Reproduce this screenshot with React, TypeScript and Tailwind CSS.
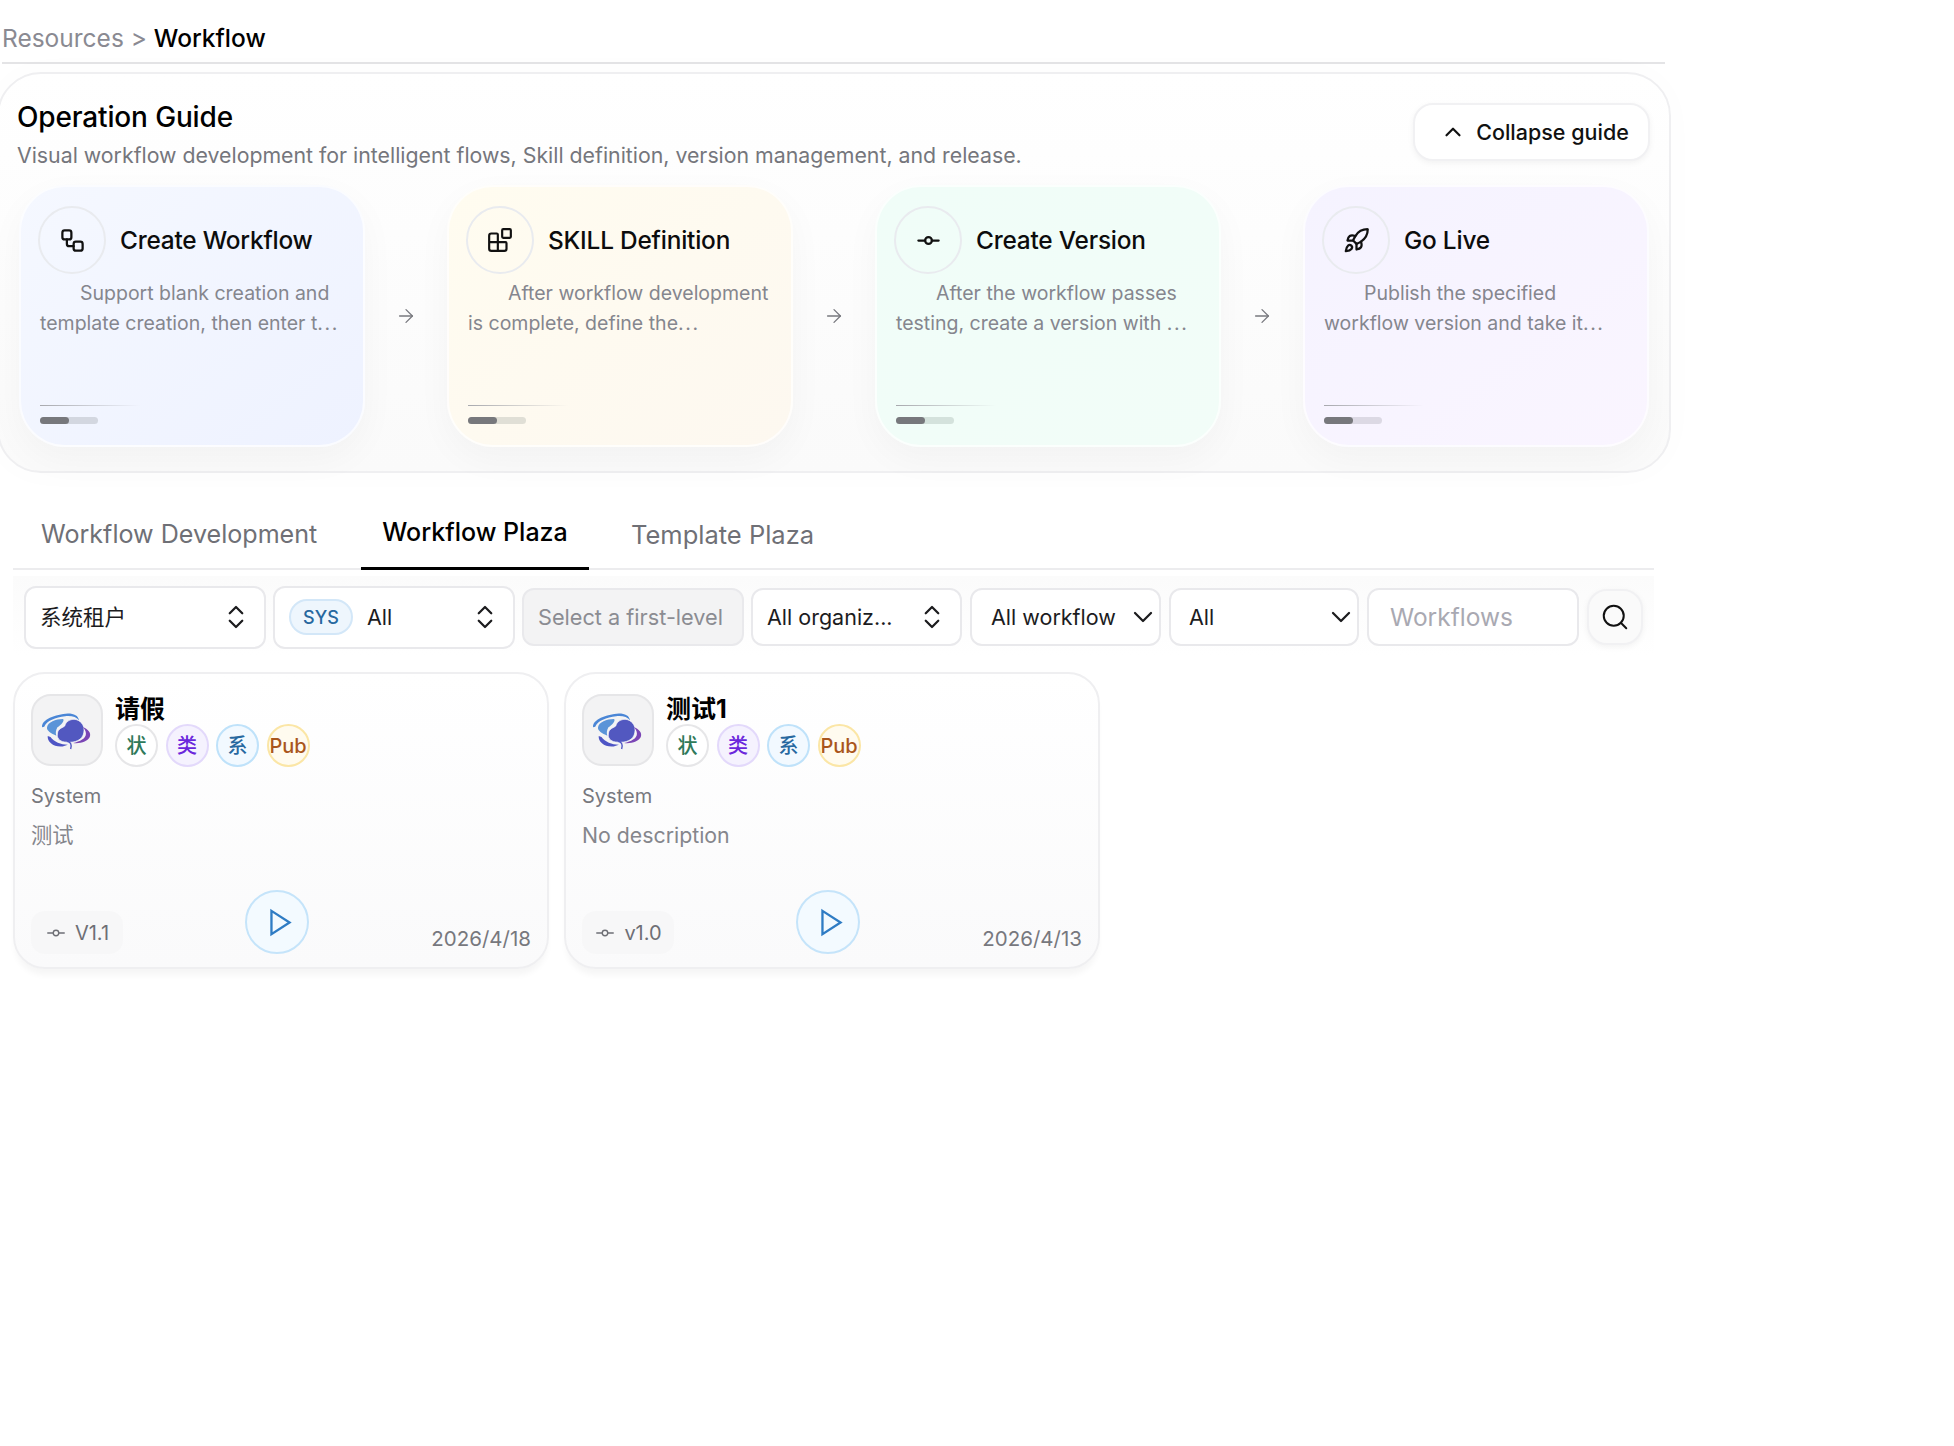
import { ArrowRight, Blocks, ChevronDown, ChevronUp, ChevronsUpDown, GitCommitHorizontal, Rocket, Search, Workflow } from 'lucide-react';

const font = 'font-["Inter","Noto_Sans_CJK_SC",sans-serif]';

function PlayIcon() {
  return (
    <svg width="31" height="31" viewBox="0 0 24 24" fill="none" stroke="currentColor" strokeWidth="1.8" strokeLinejoin="miter" className="ml-1.5">
      <polygon points="5 3 19 12 5 21" />
    </svg>
  );
}

function Logo() {
  return (
    <svg width="54" height="41" viewBox="40 60 155 118" fill="none">
      <path d="M46 110C42 88 85 72 120 70C138 70 150 76 152 90C145 80 130 76 112 78C85 80 58 92 52 108Z" fill="#4a86d6" />
      <path d="M60 110C62 95 85 86 106 86C112 90 100 104 90 110C85 118 84 128 87 134C72 128 58 120 60 110Z" fill="#5a94d8" />
      <path d="M90 128C90 114 104 112 111 106C114 90 135 82 150 90C166 98 170 116 164 132C156 152 130 155 110 152C96 150 87 140 90 128Z" fill="#5258c0" stroke="#fff" strokeWidth="2" />
      <path d="M62 135C60 152 80 168 105 165L120 160C100 160 80 152 70 138Z" fill="#4e55c5" />
      <path d="M162 108C178 115 188 125 183 138C178 150 155 158 135 155C155 150 172 142 172 128C172 120 168 114 162 108Z" fill="#7a45b5" />
      <path d="M118 150C128 152 132 160 128 172" stroke="#4e55c5" strokeWidth="4" />
    </svg>
  );
}

const steps = [
  { title: 'Create Workflow', one: 'Support blank creation and', two: 'template creation, then enter t', end: '...', bg: 'bg-gradient-to-br from-[#f5f8ff] to-[#eef2ff]', track: 'bg-[#d3d7e0]', icon: <Workflow size={27} strokeWidth={2} /> },
  { title: 'SKILL Definition', one: 'After workflow development', two: 'is complete, define the', end: '...', bg: 'bg-gradient-to-br from-[#fffcf0] to-[#fdf8f0]', track: 'bg-[#e0dfd6]', icon: <Blocks size={26} strokeWidth={2} /> },
  { title: 'Create Version', one: 'After the workflow passes', two: 'testing, create a version with ', end: '...', bg: 'bg-gradient-to-br from-[#f0fdf8] to-[#f2fdf8]', track: 'bg-[#d4e2dc]', icon: <GitCommitHorizontal size={27} strokeWidth={2} /> },
  { title: 'Go Live', one: 'Publish the specified', two: 'workflow version and take it', end: '...', bg: 'bg-gradient-to-br from-[#f5f3ff] to-[#faf5ff]', track: 'bg-[#dcd9e4]', icon: <Rocket size={27} strokeWidth={2} /> },
];

function StepCard({ step }: { step: (typeof steps)[number] }) {
  return (
    <div className={`w-[346px] h-[262px] shrink-0 rounded-[46px] border-2 border-white/70 pl-[17px] pt-[19px] shadow-[0_12px_36px_rgba(0,0,0,0.035)] ${step.bg}`}>
      <div className="flex items-center gap-[14px]">
        <div className="w-[68px] h-[68px] rounded-full border-2 border-[#e9ebef] flex items-center justify-center text-[#111]">
          {step.icon}
        </div>
        <h3 className="text-[24.4px] font-medium text-[#0c0c0c] tracking-[-0.2px]">{step.title}</h3>
      </div>
      <p className="mt-[4px] ml-[2px] text-[19.5px] leading-[30px] text-[#85868e] whitespace-nowrap">
        <span className="pl-10">{step.one}</span>
        <br />
        {step.two}
        <span className="tracking-[1.6px]">{step.end}</span>
      </p>
      <div className="mt-[67px] ml-[2px] h-px w-[100px] bg-gradient-to-r from-[#a8a9ae] to-transparent" />
      <div className={`mt-[11px] ml-[2px] h-[7px] w-[58px] rounded-full ${step.track}`}>
        <div className="h-full w-[29px] rounded-full bg-[#77787c]" />
      </div>
    </div>
  );
}

function SelectBox({ width, children, icon, tall }: { width: string; children: React.ReactNode; icon: 'updown' | 'down'; tall?: boolean }) {
  return (
    <div className={`${width} ${tall ? 'h-[63px]' : 'h-[58px]'} shrink-0 rounded-[12px] border-2 border-[#e9e9ec] bg-white flex items-center justify-between pl-[14px] ${icon === 'updown' ? 'pr-[13px]' : 'pr-0'} text-[21.5px] text-[#1c1c1e]`}>
      <div className="flex items-center min-w-0 whitespace-nowrap">{children}</div>
      {icon === 'updown' ? (
        <ChevronsUpDown size={30} strokeWidth={1.8} className="shrink-0" />
      ) : (
        <ChevronDown size={32} strokeWidth={1.7} className="shrink-0" />
      )}
    </div>
  );
}

const badges = [
  { label: '状', cls: 'border-[#e6e6e8] bg-white text-[#2f7a5a]' },
  { label: '类', cls: 'border-[#e3d9fb] bg-[#f5f2fe] text-[#6b26dc]' },
  { label: '系', cls: 'border-[#bfe2fa] bg-[#f2f9ff] text-[#27689f]' },
  { label: 'Pub', cls: 'border-[#fbe6a6] bg-[#fffbef] text-[#a9561c]' },
];

function WorkflowCard({ title, desc, version, date }: { title: string; desc: string; version: string; date: string }) {
  return (
    <div className="w-[536px] h-[297px] rounded-[32px] border-2 border-[#efeff1] bg-gradient-to-b from-white to-[#fafafb] px-[16px] pt-[20px] shadow-[0_8px_6px_-2px_rgba(0,0,0,0.04)]">
      <div className="flex gap-3">
        <div className="w-[72px] h-[72px] rounded-[20px] border-2 border-[#e6e6e8] bg-[#f3f3f4] flex items-center justify-center">
          <Logo />
        </div>
        <div>
          <h3 className="text-[25px] leading-[30px] font-bold text-black">{title}</h3>
          <div className="flex gap-[7.5px]">
            {badges.map((b) => (
              <span key={b.label} className={`w-[43px] h-[43px] rounded-full border-2 flex items-center justify-center text-[20px] font-medium whitespace-nowrap ${b.cls}`}>
                {b.label}
              </span>
            ))}
          </div>
        </div>
      </div>
      <p className="mt-[15px] text-[20px] leading-[28px] text-[#77787e]">System</p>
      <p className="mt-[10px] text-[21.3px] leading-[30px] text-[#85868c]">{desc}</p>
      <div className="mt-[40px] flex items-end justify-between">
        <div className="w-[92px] h-[43px] rounded-[14px] bg-[#f7f7f8] flex items-center justify-center gap-[8px] text-[#6e6f75] text-[20px]">
          <GitCommitHorizontal size={22} strokeWidth={1.5} />
          {version}
        </div>
        <button className="w-[64px] h-[64px] rounded-full border-2 border-[#c5e4fa] bg-[#f3faff] flex items-center justify-center text-[#2f7cc4]">
          <PlayIcon />
        </button>
        <span className="text-[20.5px] leading-[30px] text-[#77787e]">{date}</span>
      </div>
    </div>
  );
}

export default function App() {
  return (
    <div className={`${font} min-h-[1446px] w-[1954px] bg-white overflow-hidden`}>
      <div className="w-[1671px]">
        <div className="ml-[2px] mr-[6px] h-[64px] border-b-2 border-[#e4e4e6] flex items-end pb-[8px] text-[24.5px] leading-[32px]">
          <span className="text-[#8a8a92]">Resources &gt;&nbsp;</span>
          <span className="text-black font-medium">Workflow</span>
        </div>

        <section className="mt-2 -ml-[3px] h-[401px] rounded-[44px] border-2 border-[#efeff1] bg-gradient-to-b from-white to-[#fafafa] pl-[18px] pr-[19px] shadow-[0_0_40px_rgba(0,0,0,0.015)]">
          <div className="flex justify-between">
            <div className="pt-[24px]">
              <h2 className="text-[28px] leading-[38px] font-medium text-black tracking-[-0.15px]">Operation Guide</h2>
              <p className="mt-[1px] text-[21.3px] leading-[36px] text-[#75767c]">Visual workflow development for intelligent flows, Skill definition, version management, and release.</p>
            </div>
            <button className="mt-[29px] w-[237px] h-[58px] rounded-[20px] border-2 border-[#f1f1f3] bg-white shadow-[0_2px_6px_rgba(0,0,0,0.05)] flex items-center justify-center gap-[10px] pl-[6px] text-[21.5px] font-medium text-[#111]">
              <ChevronUp size={26} strokeWidth={2} />
              Collapse guide
            </button>
          </div>
          <div className="mt-[12px] ml-[2px] flex items-stretch">
            {steps.map((step, i) => (
              <div key={step.title} className="flex items-center">
                <StepCard step={step} />
                {i < steps.length - 1 && (
                  <div className="w-[82px] flex justify-center text-[#77787e]">
                    <ArrowRight size={22} strokeWidth={1.4} />
                  </div>
                )}
              </div>
            ))}
          </div>
        </section>

        <div className="mt-[24px] ml-[13px] w-[1641px] h-[73px] border-b-2 border-[#ececee] flex items-stretch text-[25.5px]">
          <div className="w-[348px] pl-[28px] pt-[19px] text-[25.1px] text-[#6f7076]">Workflow Development</div>
          <div className="w-[228px] -mb-[2px] border-b-[3px] border-black flex justify-center pt-[17px] text-[25px] font-medium text-black">Workflow Plaza</div>
          <div className="pl-[42px] pt-[19px] text-[#6f7076]">Template Plaza</div>
        </div>

        <div className="ml-[13px] w-[1641px] h-[80px] mt-[6px] bg-gradient-to-b from-[#fbfbfb] to-white pl-[11px] pt-[2px] flex items-center gap-2">
          <SelectBox width="w-[242px] -mr-px" icon="updown" tall>系统租户</SelectBox>
          <SelectBox width="w-[242px] -mr-px" icon="updown" tall>
            <span className="w-[64px] h-[36px] mr-[14px] rounded-full border-2 border-[#d3e7f8] bg-[#eef6fd] flex items-center justify-center text-[18px] font-medium text-[#27689f]">SYS</span>
            All
          </SelectBox>
          <div className="w-[222px] -mr-px h-[58px] shrink-0 rounded-[12px] border-2 border-[#e9e9ec] bg-[#f3f3f4] flex items-center pl-[14px] text-[21.7px] text-[#8b8c92]">Select a first-level</div>
          <SelectBox width="w-[211px]" icon="updown">All organiz...</SelectBox>
          <SelectBox width="w-[191px]" icon="down"><span className="pl-[5px]">All workflow</span></SelectBox>
          <SelectBox width="w-[190px]" icon="down"><span className="pl-[4px]">All</span></SelectBox>
          <div className="w-[212px] h-[58px] shrink-0 rounded-[12px] border-2 border-[#e9e9ec] bg-white flex items-center pl-[21px] text-[24.5px] text-[#a9a9b2]">Workflows</div>
          <button className="w-[56px] h-[56px] shrink-0 rounded-[20px] border-2 border-[#f1f1f3] bg-[#fafafa] shadow-[0_2px_6px_rgba(0,0,0,0.05)] flex items-center justify-center text-[#111]">
            <Search size={30} strokeWidth={1.6} />
          </button>
        </div>

        <div className="ml-[13px] mt-[16px] flex gap-[15px]">
          <WorkflowCard title="请假" desc="测试" version="V1.1" date="2026/4/18" />
          <WorkflowCard title="测试1" desc="No description" version="v1.0" date="2026/4/13" />
        </div>
      </div>
    </div>
  );
}
